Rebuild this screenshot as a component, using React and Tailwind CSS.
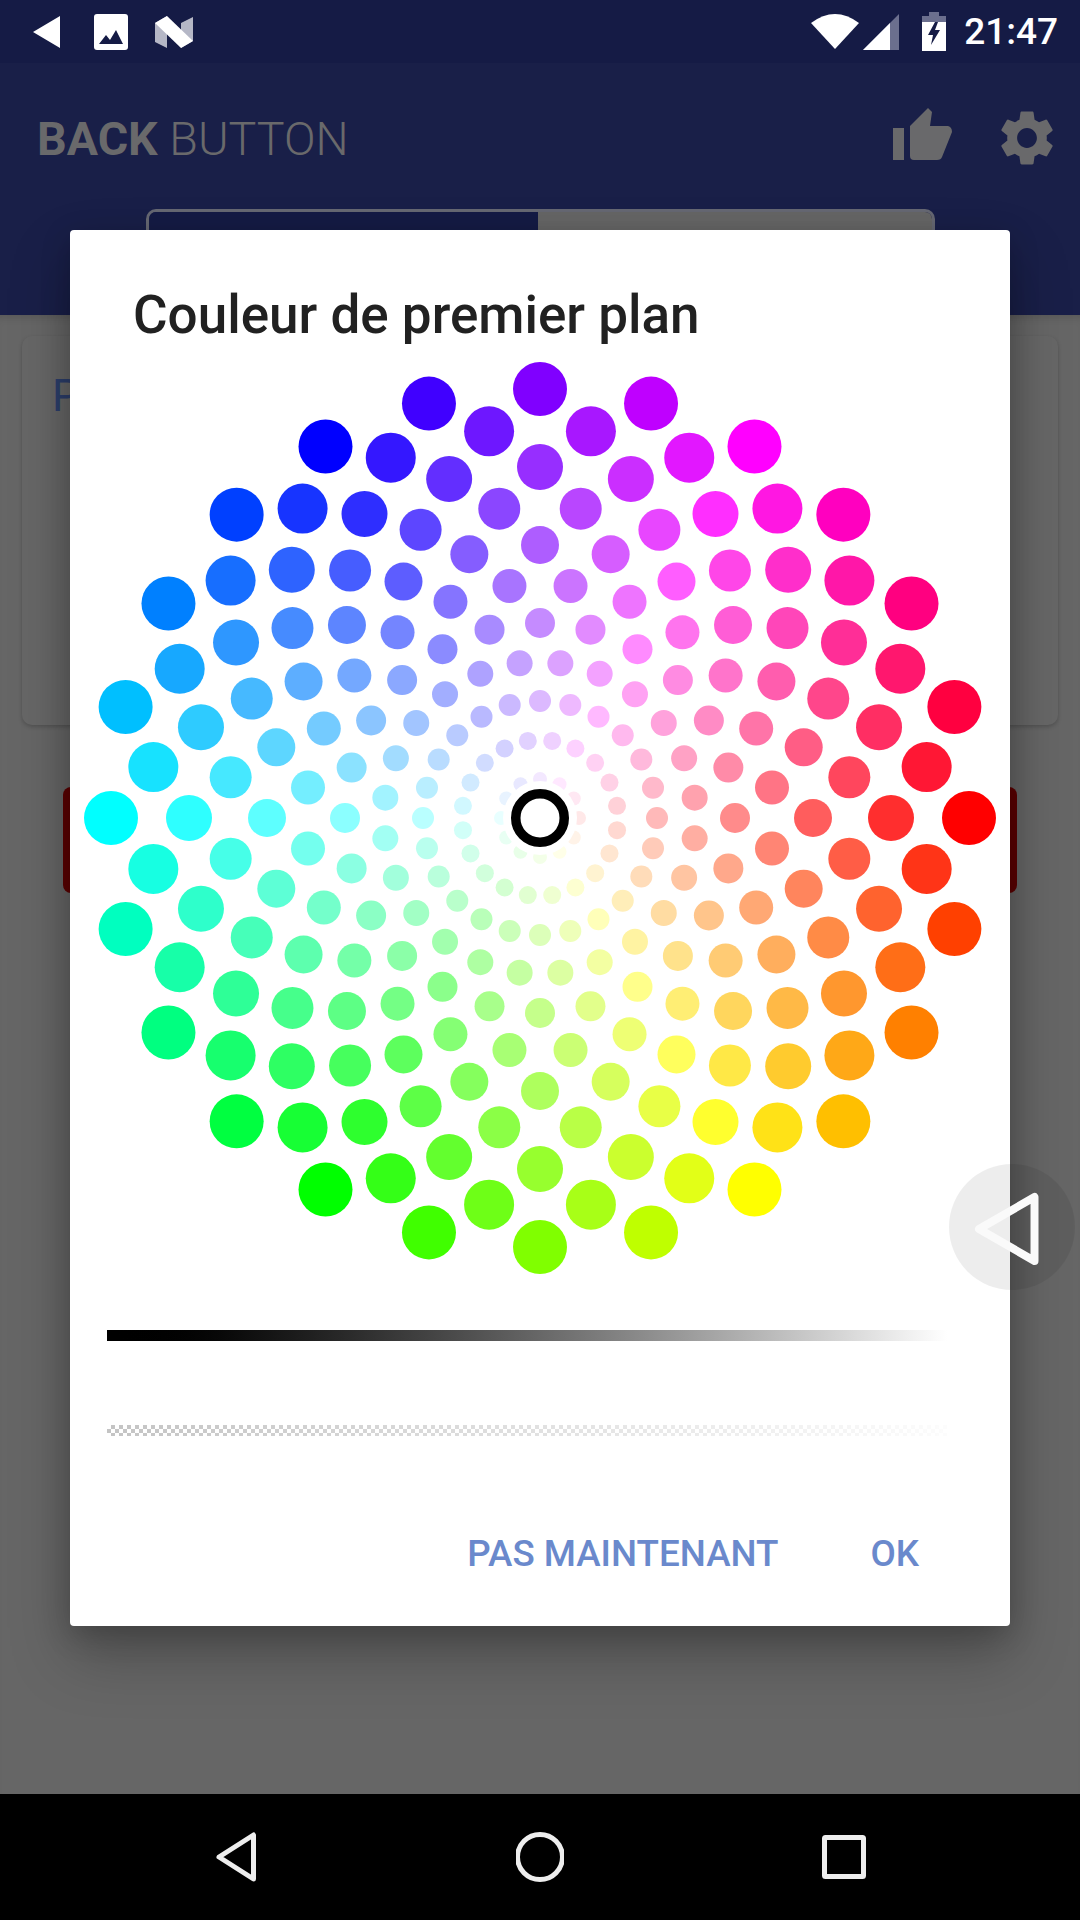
const DENSITY = 12;
const MAX_RADIUS = 429;
const C_SIZE = 20;
const STROKE = 3;

const hsvToRgb = (h, s, v) => {
    const f = (n) => {
        const k = (n + h / 60) % 6;
        return Math.round(255 * (v - v * s * Math.max(0, Math.min(k, 4 - k, 1))));
    };
    return `rgb(${f(5)},${f(3)},${f(1)})`;
};

// rings of dots, outermost are biggest
const buildDots = () => {
    const dots = [];
    for (let i = 1; i < DENSITY; i++) {
        const p = i / (DENSITY - 1);
        const jitter = (i - DENSITY / 2) / DENSITY;
        const radius = MAX_RADIUS * p;
        const size = C_SIZE + C_SIZE * 1.2 * jitter;
        const calc = Math.max(1, Math.floor((0.975 * Math.PI) / Math.asin(size / radius) + 0.5));
        const total = Math.min(calc, DENSITY * 2);
        for (let j = 0; j < total; j++) {
            const angle = (Math.PI * 2 * j) / total + (Math.PI / total) * ((i + 1) % 2);
            dots.push({
                key: `${i}-${j}`,
                x: radius * Math.cos(angle),
                y: radius * Math.sin(angle),
                r: size - STROKE,
                fill: hsvToRgb((angle * 180) / Math.PI, p, 1),
            });
        }
    }
    return dots;
};

const ColorWheel = () => (
    <svg width="940" height="912" viewBox="-470 -456 940 912" className="block">
        {buildDots().map((d) => (
            <circle key={d.key} cx={d.x} cy={d.y} r={d.r} fill={d.fill} />
        ))}
        <circle r="37" fill="#fff" />
        <circle r="24.25" fill="#fff" stroke="#000" strokeWidth="9.5" />
    </svg>
);

const StatusBar = () => (
    <div className="h-[63px] shrink-0 bg-[#151b45] flex items-center justify-between pl-[33px] pr-[22px]">
        <div className="flex items-center gap-[27px]">
            <svg width="34" height="34" viewBox="0 0 34 34">
                <path d="M27 1 L0 17 L27 33 Z" fill="#fff" />
            </svg>
            <svg width="34" height="36" viewBox="0 0 34 36">
                <rect width="34" height="36" rx="3" fill="#fff" />
                <path d="M5 30 L12 21 L16 26 L22 16 L29 30 Z" fill="#151b45" />
            </svg>
            <svg width="38" height="32" viewBox="0 0 38 32">
                <path d="M0 7 L12 0 L12 32 L0 26 Z" fill="#b5b7c6" />
                <path d="M26 7 L38 1 L38 25 L26 32 Z" fill="#b5b7c6" />
                <path d="M0 7 L12 0 L38 25 L26 32 Z" fill="#fff" />
            </svg>
        </div>
        <div className="flex items-center">
            <svg width="48" height="35" viewBox="0 0 48 35" className="mr-[4px]">
                <path d="M24 35 L0 9 Q24 -9 48 9 Z" fill="#fff" />
            </svg>
            <svg width="36" height="36" viewBox="0 0 36 36" className="mr-[23px]">
                <path d="M36 0 L36 36 L0 36 Z" fill="#6b6f8e" />
                <path d="M27 9 L27 36 L0 36 Z" fill="#fff" />
            </svg>
            <svg width="24" height="39" viewBox="0 0 24 39" className="mr-[18px]">
                <path d="M7 0 H17 V4 H24 V39 H0 V4 H7 Z" fill="#6b6f8e" />
                <path d="M0 10 H24 V39 H0 Z" fill="#fff" />
                <path d="M13 10 L6 23 L11 23 L9 33 L18 18 L13 18 L16 10 Z" fill="#151b45" />
            </svg>
            <span className="text-white text-[37px] font-medium leading-none">21:47</span>
        </div>
    </div>
);

const Toolbar = () => (
    <div className="h-[252px] shrink-0 bg-[#191f48] flex flex-col">
        <div className="flex items-start justify-between pl-[37px] pr-[20px] pt-[46px] h-[146px]">
            <div className="text-[46.6px] leading-[60px] text-[#69696b]">
                <span className="font-bold">BACK</span> <span className="font-light">BUTTON</span>
            </div>
            <div className="flex items-start -mt-[2px]">
                <svg width="60" height="54" viewBox="0 0 60 54" className="mr-[41px]">
                    <rect x="0" y="21" width="11" height="32" fill="#69696b" />
                    <path d="M35 1 L39 5 L37 19 L55 19 Q59 20 59 25 L49 50 Q48 53 44 53 L21 53 Q17 53 17 49 L17 19 Z" fill="#69696b" />
                </svg>
                <svg width="66" height="66" viewBox="0 0 24 24" className="-mt-[2px]">
                    <path fill="#69696b" d="M19.14 12.94c.04-.3.06-.61.06-.94 0-.32-.02-.64-.07-.94l2.03-1.58c.18-.14.23-.41.12-.61l-1.92-3.32c-.12-.22-.37-.29-.59-.22l-2.39.96c-.5-.38-1.03-.7-1.62-.94l-.36-2.54c-.04-.24-.24-.41-.48-.41h-3.84c-.24 0-.43.17-.47.41l-.36 2.54c-.59.24-1.13.57-1.62.94l-2.39-.96c-.22-.08-.47 0-.59.22L2.74 8.87c-.12.21-.08.47.12.61l2.03 1.58c-.05.3-.09.63-.09.94s.02.64.07.94l-2.03 1.58c-.18.14-.23.41-.12.61l1.92 3.32c.12.22.37.29.59.22l2.39-.96c.5.38 1.03.7 1.62.94l.36 2.54c.05.24.24.41.48.41h3.84c.24 0 .44-.17.47-.41l.36-2.54c.59-.24 1.13-.56 1.62-.94l2.39.96c.22.08.47 0 .59-.22l1.92-3.32c.12-.22.07-.47-.12-.61l-2.01-1.58zM12 15.6c-1.98 0-3.6-1.62-3.6-3.6s1.62-3.6 3.6-3.6 3.6 1.62 3.6 3.6-1.62 3.6-3.6 3.6z" />
                </svg>
            </div>
        </div>
        <div className="ml-[146px] w-[789px] h-[90px] flex rounded-t-[10px] overflow-hidden border-t-[3px] border-x-[3px] border-[#666873]">
            <div className="w-[389px] bg-[#151b45]" />
            <div className="flex-1 bg-[#666666]" />
        </div>
    </div>
);

const Content = () => (
    <div className="flex-1 bg-[#666666] px-[22px] pt-[21px] shadow-[inset_0_8px_8px_-6px_rgba(0,0,0,0.15)]">
        <div className="h-[389px] rounded-[10px] bg-[#676767] shadow-[0_2px_4px_rgba(0,0,0,0.2)] pl-[30px] pt-[30px] text-[#2c3e6b] text-[44px] leading-[60px]">
            P
        </div>
        <div className="mt-[62px] mx-[41px] h-[106px] rounded-[8px] bg-[#5c0000]" />
    </div>
);

const NavBar = () => (
    <div className="h-[126px] shrink-0 bg-black flex items-center justify-center gap-[256px]">
        <svg width="48" height="56" viewBox="0 0 48 56" fill="none" stroke="#eeeeee" strokeWidth="5" strokeLinejoin="round">
            <path d="M7 28 L41.5 6 L41.5 50 Z" />
        </svg>
        <svg width="48" height="56" viewBox="0 0 48 56" fill="none" stroke="#eeeeee" strokeWidth="5">
            <circle cx="24" cy="28" r="22.5" />
        </svg>
        <svg width="48" height="56" viewBox="0 0 48 56" fill="none" stroke="#eeeeee" strokeWidth="5" strokeLinejoin="round">
            <rect x="4.5" y="8.5" width="39" height="39" rx="1" />
        </svg>
    </div>
);

const Dialog = () => (
    <div className="absolute left-[70px] top-[230px] w-[940px] h-[1396px] bg-white rounded-[4px] shadow-[0_30px_60px_rgba(0,0,0,0.25),0_8px_30px_rgba(0,0,0,0.2)]">
        <div className="h-[132px] pl-[63px] pt-[55px] text-[#212121] text-[53px] leading-[60px] font-medium">
            Couleur de premier plan
        </div>
        <ColorWheel />
        <div className="mt-[56px] ml-[37px] w-[840px] h-[11px] bg-gradient-to-r from-black to-white" />
        <div className="mt-[84px] ml-[37px] w-[840px] h-[11px] bg-[repeating-conic-gradient(#c4c4c4_0_25%,#ffffff_0_50%)] bg-[length:8px_8px]">
            <div className="h-full bg-[linear-gradient(to_right,transparent,white_105%)]" />
        </div>
        <div className="mt-[93px] pr-[91px] flex justify-end gap-[92px] text-[#6a89cc] text-[36.75px] leading-[50px] font-medium">
            <span>PAS MAINTENANT</span>
            <span>OK</span>
        </div>
    </div>
);

const FloatingBack = () => (
    <div className="absolute left-[949px] top-[1164px] w-[126px] h-[126px] rounded-full bg-black/[0.07]">
        <svg width="126" height="126" viewBox="0 0 126 126" fill="none" stroke="#fafafa" strokeWidth="8" strokeLinejoin="round">
            <path d="M30 65 L85.5 33 L85.5 97 Z" />
        </svg>
    </div>
);

export default function App() {
    return (
        <div className="relative w-[1080px] h-[1920px] overflow-hidden flex flex-col font-['Roboto',sans-serif]">
            <StatusBar />
            <Toolbar />
            <Content />
            <NavBar />
            <Dialog />
            <FloatingBack />
        </div>
    );
}
